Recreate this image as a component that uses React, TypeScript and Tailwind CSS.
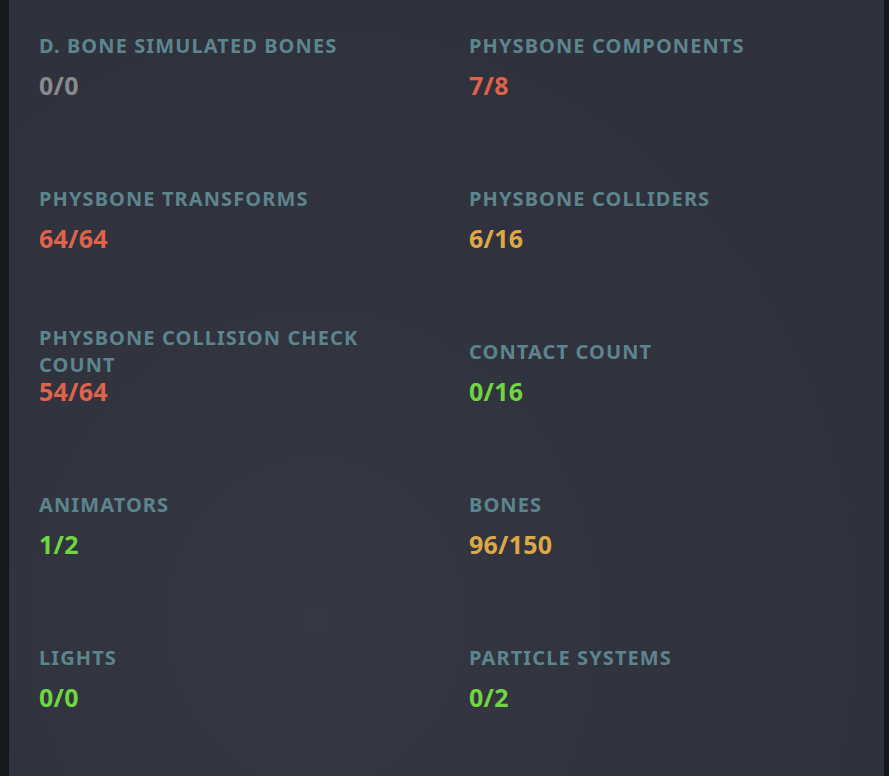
import React from 'react';

type Tone = 'muted' | 'bad' | 'warn' | 'good';

const TONE_CLS: Record<Tone, string> = {
  muted: 'text-[#8a8a8c]',
  bad: 'text-[#e0624b]',
  warn: 'text-[#dea846]',
  good: 'text-[#6fd63f]'
};

const STATS: { label: string; value: string; tone: Tone }[] = [
  { label: 'D. Bone Simulated Bones', value: '0/0', tone: 'muted' },
  { label: 'PhysBone Components', value: '7/8', tone: 'bad' },
  { label: 'PhysBone Transforms', value: '64/64', tone: 'bad' },
  { label: 'PhysBone Colliders', value: '6/16', tone: 'warn' },
  { label: 'PhysBone Collision Check Count', value: '54/64', tone: 'bad' },
  { label: 'Contact Count', value: '0/16', tone: 'good' },
  { label: 'Animators', value: '1/2', tone: 'good' },
  { label: 'Bones', value: '96/150', tone: 'warn' },
  { label: 'Lights', value: '0/0', tone: 'good' },
  { label: 'Particle Systems', value: '0/2', tone: 'good' }
];

function StatCell({ label, value, tone }: { label: string; value: string; tone: Tone }) {
  return (
    <div className="h-[153px]">
      {/* label box is two lines tall, single-line labels sit in the middle */}
      <div className="h-[54px] flex items-center">
        <span className="uppercase font-bold text-[20px] leading-[27px] tracking-[0.055em] text-[#5d858e]">
          {label}
        </span>
      </div>
      <div className={`font-bold text-[25px] leading-[26px] tracking-[0.01em] ${TONE_CLS[tone]}`}>{value}</div>
    </div>
  );
}

export default function App() {
  return (
    <div
      className="flex h-screen w-full overflow-hidden bg-[#15171c]"
      style={{ fontFamily: '"Noto Sans", "Open Sans", sans-serif' }}
    >
      <div className="w-[9px] shrink-0 bg-[#16181d]" />
      <div className="flex-1 bg-[radial-gradient(ellipse_at_35%_80%,#353744_0%,#30323d_45%,#2e303b_100%)] px-[30px] pt-[18px]">
        <div className="grid grid-cols-2 gap-x-[45px]">
          {STATS.map(s => (
            <StatCell key={s.label} {...s} />
          ))}
        </div>
      </div>
      <div className="w-[5px] shrink-0 bg-[#14161b]" />
    </div>
  );
}
